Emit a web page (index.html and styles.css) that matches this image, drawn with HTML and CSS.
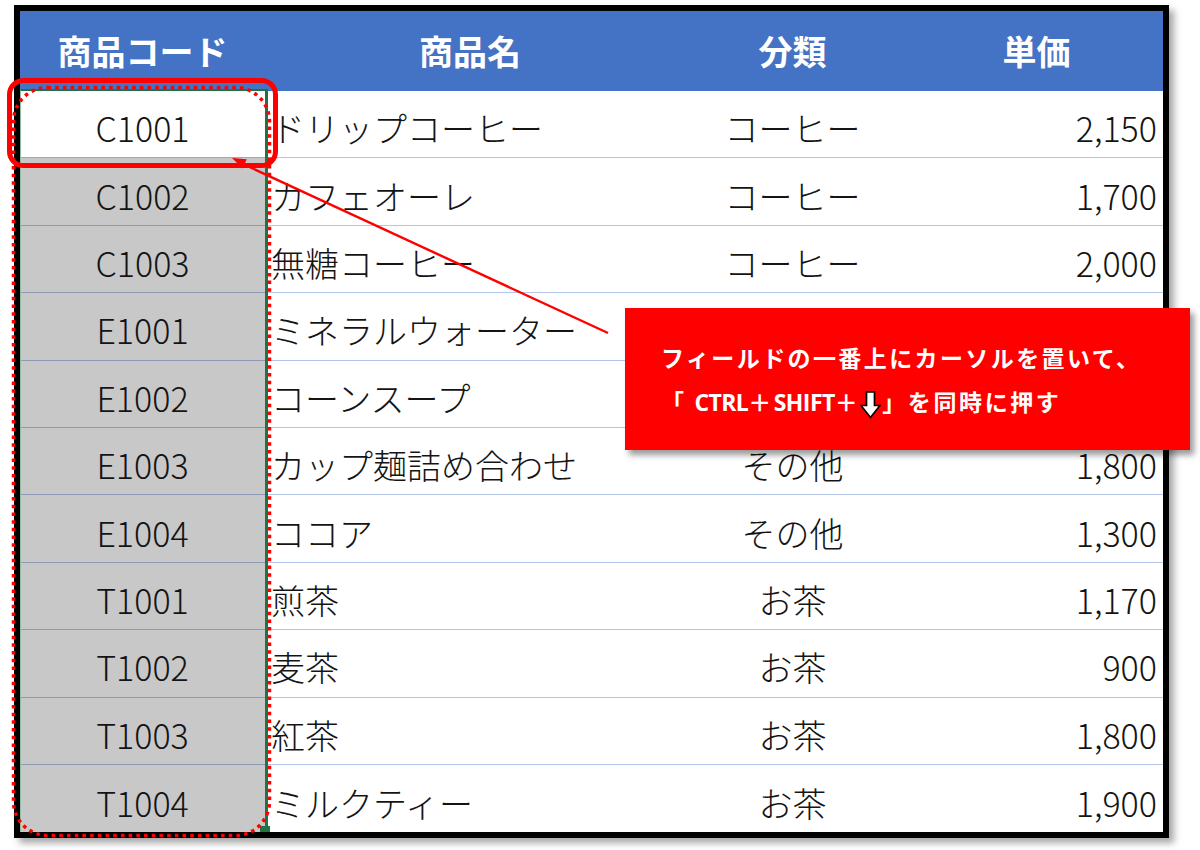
FILE: index.html
```html
<!DOCTYPE html>
<html lang="ja">
<head>
<meta charset="utf-8">
<title>商品マスタ</title>
<link rel="stylesheet" href="styles.css">
</head>
<body>
<div class="page">
  <div class="frame">
    <div class="table">
      <div class="c head">商品コード</div><div class="c head">商品名</div><div class="c head">分類</div><div class="c head">単価</div>

      <div class="c code active">C1001</div><div class="c name">ドリップコーヒー</div><div class="c cat">コーヒー</div><div class="c price">2,150</div>
      <div class="c code">C1002</div><div class="c name">カフェオーレ</div><div class="c cat">コーヒー</div><div class="c price">1,700</div>
      <div class="c code">C1003</div><div class="c name">無糖コーヒー</div><div class="c cat">コーヒー</div><div class="c price">2,000</div>
      <div class="c code">E1001</div><div class="c name">ミネラルウォーター</div><div class="c cat"></div><div class="c price"></div>
      <div class="c code">E1002</div><div class="c name">コーンスープ</div><div class="c cat"></div><div class="c price"></div>
      <div class="c code">E1003</div><div class="c name">カップ麺詰め合わせ</div><div class="c cat">その他</div><div class="c price">1,800</div>
      <div class="c code">E1004</div><div class="c name">ココア</div><div class="c cat">その他</div><div class="c price">1,300</div>
      <div class="c code">T1001</div><div class="c name">煎茶</div><div class="c cat">お茶</div><div class="c price">1,170</div>
      <div class="c code">T1002</div><div class="c name">麦茶</div><div class="c cat">お茶</div><div class="c price">900</div>
      <div class="c code">T1003</div><div class="c name">紅茶</div><div class="c cat">お茶</div><div class="c price">1,800</div>
      <div class="c code last">T1004</div><div class="c name last">ミルクティー</div><div class="c cat last">お茶</div><div class="c price last">1,900</div>
    </div>
    <div class="selection"><span class="handle"></span></div>
  </div>

  <svg class="overlay" width="1200" height="850" viewBox="0 0 1200 850" aria-hidden="true">
    <rect x="13.5" y="87.5" width="256" height="748" rx="34" ry="34" fill="none" stroke="#ff0000" stroke-width="3.5" stroke-dasharray="3.5 4.2"/>
    <rect x="9.5" y="80.5" width="266" height="85" rx="14" ry="14" fill="none" stroke="#ff0000" stroke-width="5"/>
    <line x1="608" y1="333" x2="243" y2="164" stroke="#ff0000" stroke-width="2.4"/>
    <polygon points="232,158 242.6,168.4 246.8,159.3" fill="#ff0000"/>
  </svg>

  <div class="callout">
    <p class="line">フィールドの一番上にカーソルを置いて、</p>
    <p class="line line2">「&nbsp;<span class="key">CTRL</span>＋<span class="key">SHIFT</span>＋<svg class="darrow" width="21" height="28" viewBox="0 0 21 28" aria-hidden="true"><polygon points="6.5,1 14.5,1 14.5,14.5 20,14.5 10.5,26.5 1,14.5 6.5,14.5" fill="#fff" stroke="#000" stroke-width="1.7" stroke-linejoin="miter"/></svg>」を同時に押す</p>
  </div>
</div>
</body>
</html>
```

FILE: styles.css
```css
* { box-sizing: border-box; }
html, body { margin: 0; padding: 0; background: #fff; }
body { font-family: "Noto Sans CJK JP", "Noto Sans", sans-serif; }

.page {
  position: relative;
  width: 1200px;
  height: 850px;
  overflow: hidden;
  padding: 5px 0 0 14px;
}

.frame {
  position: relative;
  width: 1155px;
  border: 6px solid #000;
  box-shadow: 5px 5px 7px rgba(0, 0, 0, 0.35);
}

.table {
  display: grid;
  grid-template-columns: 245px 410px 235px 253px;
  grid-template-rows: 80px repeat(11, 67.4px);
}

.c {
  display: flex;
  align-items: center;
  font-size: 34px;
  font-weight: 300;
  color: #141414;
  line-height: 1;
  border-bottom: 1px solid #b4c6e7;
  padding-top: 8px;
  white-space: nowrap;
}
.c.last { border-bottom: none; }

.head {
  background: #4472c4;
  color: #fff;
  font-weight: 700;
  justify-content: center;
  border-bottom: none;
  padding-top: 0;
}

.code {
  justify-content: center;
  background: #c8c8c8;
  border-bottom-color: #8e9ab8;
}
.code.active { background: #fff; border-bottom-color: #9aa8c8; }

.name { padding-left: 6px; }
.cat { justify-content: center; }
.price { justify-content: flex-end; padding-right: 6px; }

.selection {
  position: absolute;
  left: 0;
  top: 78px;
  width: 248px;
  height: 743px;
  border: 2px solid #217346;
  border-right-width: 3px;
  border-left: 1px solid #8fbf9f;
  border-bottom: none;
}
.handle {
  position: absolute;
  right: -5px;
  bottom: 0;
  width: 10px;
  height: 6px;
  background: #217346;
}

.overlay {
  position: absolute;
  left: 0;
  top: 0;
  pointer-events: none;
}

.callout {
  position: absolute;
  left: 625px;
  top: 308px;
  width: 565px;
  height: 142px;
  background: #ff0000;
  box-shadow: 4px 5px 6px rgba(0, 0, 0, 0.4);
  display: flex;
  flex-direction: column;
  justify-content: center;
  padding-left: 36px;
  color: #fff;
  font-weight: 700;
}
.line {
  margin: 0;
  font-size: 23px;
  line-height: 44px;
  letter-spacing: 2.4px;
  white-space: nowrap;
}
.line2 { letter-spacing: 2.6px; }
.key {
  font-family: "Open Sans", "Noto Sans", sans-serif;
  font-weight: 700;
  letter-spacing: -0.6px;
  font-size: 23px;
}
.darrow { vertical-align: -8px; margin: 0 1px 0 0; }
```
